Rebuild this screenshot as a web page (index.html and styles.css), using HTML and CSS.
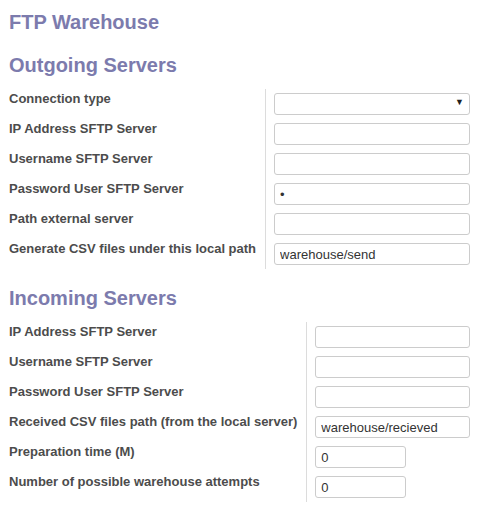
FILE: index.html
```html
<!DOCTYPE html>
<html lang="en">
<head>
    <meta charset="UTF-8">
    <title>FTP Warehouse</title>
    <link rel="stylesheet" href="styles.css">
</head>
<body>
    <div class="sheet">
        <h1 class="title">FTP Warehouse</h1>

        <h2 class="separator">Outgoing Servers</h2>
        <div class="group">
            <label class="field-label">Connection type</label>
            <div class="field-cell">
                <span class="select-box"><span class="caret">&#9660;</span></span>
            </div>
            <label class="field-label">IP Address SFTP Server</label>
            <div class="field-cell"><input type="text" class="field-input"></div>
            <label class="field-label">Username SFTP Server</label>
            <div class="field-cell"><input type="text" class="field-input"></div>
            <label class="field-label">Password User SFTP Server</label>
            <div class="field-cell"><input type="password" class="field-input" value="x"></div>
            <label class="field-label">Path external server</label>
            <div class="field-cell"><input type="text" class="field-input"></div>
            <label class="field-label">Generate CSV files under this local path</label>
            <div class="field-cell"><input type="text" class="field-input" value="warehouse/send"></div>
        </div>

        <h2 class="separator">Incoming Servers</h2>
        <div class="group">
            <label class="field-label">IP Address SFTP Server</label>
            <div class="field-cell"><input type="text" class="field-input"></div>
            <label class="field-label">Username SFTP Server</label>
            <div class="field-cell"><input type="text" class="field-input"></div>
            <label class="field-label">Password User SFTP Server</label>
            <div class="field-cell"><input type="text" class="field-input"></div>
            <label class="field-label">Received CSV files path (from the local server)</label>
            <div class="field-cell"><input type="text" class="field-input" value="warehouse/recieved"></div>
            <label class="field-label">Preparation time (M)</label>
            <div class="field-cell"><input type="text" class="field-input short" value="0"></div>
            <label class="field-label">Number of possible warehouse attempts</label>
            <div class="field-cell"><input type="text" class="field-input short" value="0"></div>
        </div>
    </div>
</body>
</html>
```

FILE: styles.css
```css
body {
    margin: 0;
    font-family: "Liberation Sans", Arial, sans-serif;
    color: #4c4c4c;
    background: #fff;
}
.sheet {
    padding: 10px 9px 0 9px;
}
.title, .separator {
    margin: 0;
    font-size: 20px;
    line-height: 24px;
    font-weight: bold;
    color: #7c7bad;
}
.title {
    margin-bottom: 19px;
}
.separator {
    margin-bottom: 12px;
}
.group {
    display: grid;
    grid-template-columns: max-content 1fr;
    margin-bottom: 17px;
}
.field-label {
    font-size: 13px;
    line-height: 16px;
    font-weight: bold;
    padding: 2px 9px 0 0;
    height: 28px;
}
.field-cell {
    border-left: 1px solid #dcdcdc;
    padding: 4px 0 4px 8px;
    height: 22px;
}
.field-input, .select-box {
    display: block;
    box-sizing: border-box;
    width: 100%;
    height: 22px;
    margin: 0;
    padding: 0 5px;
    border: 1px solid #cccccc;
    border-radius: 3px;
    font-family: "Liberation Sans", Arial, sans-serif;
    font-size: 13px;
    color: #333;
    background: #fff;
    outline: none;
}
.field-input.short {
    width: 91px;
}
.select-box {
    position: relative;
}
.caret {
    position: absolute;
    right: 5px;
    top: 3px;
    font-size: 9px;
    color: #222;
}
```
